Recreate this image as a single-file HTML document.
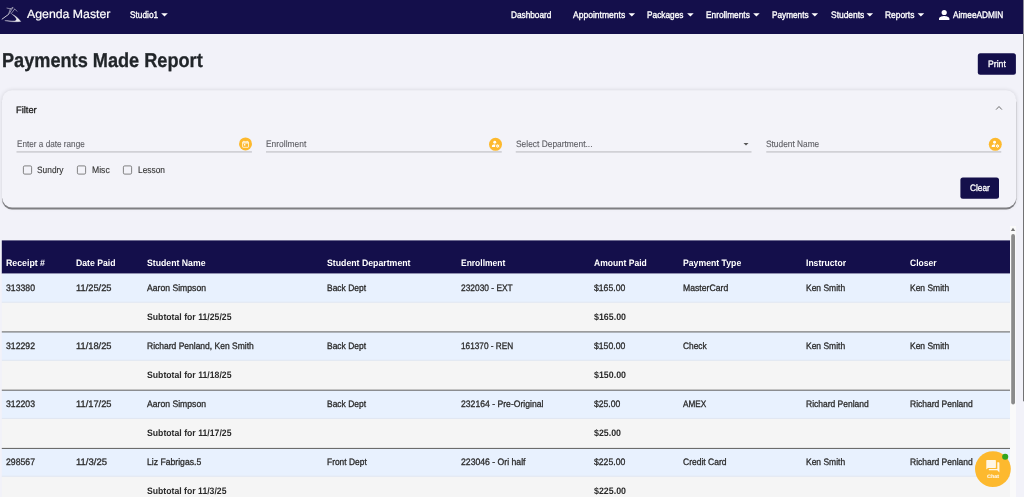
<!DOCTYPE html>
<html><head><meta charset="utf-8"><title>Payments Made Report</title>
<style>
html,body{margin:0;padding:0}
body{width:1024px;height:497px;overflow:hidden;position:relative;background:#f2f2f9;font-family:"Liberation Sans",sans-serif}
.t{position:absolute;white-space:pre;line-height:1;transform-origin:0 50%;text-rendering:geometricPrecision}
.a{position:absolute;display:block}
.ct{left:987.1px;top:474.7px;font-size:5px;font-weight:700;color:#fff3dc;transform:scaleX(1.09);-webkit-text-stroke:.15px #fff3dc}
</style></head><body>
<svg class="a" style="left:0;top:0" width="1024" height="497" viewBox="0 0 1024 497"><defs><filter id="b1" x="-5%" y="-20%" width="110%" height="140%"><feGaussianBlur stdDeviation=".55"/></filter><filter id="b2" x="-5%" y="-20%" width="110%" height="140%"><feGaussianBlur stdDeviation="2"/></filter></defs><rect x="2" y="90.3" width="1014.3" height="117.1" fill="#000" rx="10" opacity=".13" filter="url(#b2)"/><rect x="2" y="92.4" width="1014.3" height="117.1" fill="#000" rx="10" opacity=".45" filter="url(#b1)"/><rect x="2" y="90.3" width="1014.3" height="117.1" fill="#f3f3f9" rx="10"/><rect x="0" y="0" width="1024" height="34" fill="#140f4b"/><rect x="1.8" y="240.4" width="1008.2" height="33.3" fill="#140f4b"/><rect x="1.8" y="273.6" width="1008.2" height="29.1" fill="#e8f1fe"/><rect x="1.8" y="302.5" width="1008.2" height="29.6" fill="#f5f5f5"/><rect x="1.8" y="331.9" width="1008.2" height="28.9" fill="#e8f1fe"/><rect x="1.8" y="360.6" width="1008.2" height="29.8" fill="#f5f5f5"/><rect x="1.8" y="390.2" width="1008.2" height="28.7" fill="#e8f1fe"/><rect x="1.8" y="418.7" width="1008.2" height="29.95" fill="#f5f5f5"/><rect x="1.8" y="448.45" width="1008.2" height="28.25" fill="#e8f1fe"/><rect x="1.8" y="476.5" width="1008.2" height="30.4" fill="#f5f5f5"/><rect x="1.8" y="301.7" width="1008.2" height="1" fill="#e0e6f1"/><rect x="1.8" y="331.35" width="1008.2" height="1.1" fill="#6c6c6c"/><rect x="1.8" y="359.8" width="1008.2" height="1" fill="#e0e6f1"/><rect x="1.8" y="389.65" width="1008.2" height="1.1" fill="#6c6c6c"/><rect x="1.8" y="417.9" width="1008.2" height="1" fill="#e0e6f1"/><rect x="1.8" y="447.9" width="1008.2" height="1.1" fill="#6c6c6c"/><rect x="1.8" y="475.7" width="1008.2" height="1" fill="#e0e6f1"/><rect x="1.8" y="506.15" width="1008.2" height="1.1" fill="#6c6c6c"/><rect x="16.5" y="151.15" width="235.4" height="1.5" fill="#cbcbd1"/><rect x="266" y="151.15" width="235.75" height="1.5" fill="#cbcbd1"/><rect x="515.75" y="151.15" width="235.75" height="1.5" fill="#cbcbd1"/><rect x="766.25" y="151.15" width="235" height="1.5" fill="#cbcbd1"/><rect x="1010" y="226" width="6" height="271" fill="#fafafa"/><path d="M1010.8 231l2.2-3.2 2.2 3.2z" fill="#777"/><rect x="1011.2" y="234" width="3.8" height="170.5" fill="#8b8b8b" rx="1.9"/><rect x="1023" y="0" width="1" height="34" fill="#8d8d9a"/><rect x="1023" y="34" width="1" height="367.3" fill="#727274"/><rect x="977.8" y="53.3" width="38.1" height="21.4" fill="#140f4b" rx="2.5"/><path d="M161.2 13.2h6.6l-3.3 3.4z" fill="#fff"/><path d="M628.5 13.2h6.6l-3.3 3.4z" fill="#fff"/><path d="M687.1 13.2h6.6l-3.3 3.4z" fill="#fff"/><path d="M753.1 13.2h6.6l-3.3 3.4z" fill="#fff"/><path d="M811.5 13.2h6.6l-3.3 3.4z" fill="#fff"/><path d="M866.5 13.2h6.6l-3.3 3.4z" fill="#fff"/><path d="M917.6 13.2h6.6l-3.3 3.4z" fill="#fff"/><path d="M743.5 143h5l-2.5 2.5z" fill="#555"/><g transform="translate(239 137.4) scale(0.5)"><circle cx="13" cy="13" r="13" fill="#fdb92e"/><g fill="none" stroke="#fff" stroke-width="1.5"><rect x="7.2" y="8.6" width="11.8" height="11.2" rx="1"/><path d="M7.2 11h11.8" stroke-width="2.2"/><path d="M9.8 6.8v2M16.4 6.8v2"/></g><rect x="9.9" y="13.4" width="2.8" height="3" fill="#fff"/></g><g transform="translate(489 137.8) scale(0.5)"><circle cx="13" cy="13" r="13" fill="#fdb92e"/><circle cx="11.5" cy="9" r="2.9" fill="#fff"/><path d="M5.8 18.2v-2c0-1.7 3.4-2.6 5.7-2.6.5 0 1 0 1.5.1-.6.9-.9 1.9-.9 3 0 .5.1 1 .3 1.5z" fill="#fff"/><circle cx="17.4" cy="16.4" r="2.7" fill="#fff"/><path d="M17.4 12.6v7.6M14.1 14.5l6.6 3.8M14.1 18.3l6.6-3.8" stroke="#fff" stroke-width="1.3"/><circle cx="17.4" cy="16.4" r="1.1" fill="#fdb92e"/></g><g transform="translate(988.8 137.8) scale(0.5)"><circle cx="13" cy="13" r="13" fill="#fdb92e"/><circle cx="11.5" cy="9" r="2.9" fill="#fff"/><path d="M5.8 18.2v-2c0-1.7 3.4-2.6 5.7-2.6.5 0 1 0 1.5.1-.6.9-.9 1.9-.9 3 0 .5.1 1 .3 1.5z" fill="#fff"/><circle cx="17.4" cy="16.4" r="2.7" fill="#fff"/><path d="M17.4 12.6v7.6M14.1 14.5l6.6 3.8M14.1 18.3l6.6-3.8" stroke="#fff" stroke-width="1.3"/><circle cx="17.4" cy="16.4" r="1.1" fill="#fdb92e"/></g><g transform="translate(0 0) scale(1)"><g fill="none" stroke="#fff" stroke-linecap="round" stroke-width=".55" opacity=".92"><path d="M2.1 19.1L8.5 14.4" stroke-width=".85"/><path d="M7 8.1l3.4.7 2.4-1.2M12.8 7.6L9.4 13.4M14.5 9.3l-3.4 4.4M14.5 8.8l2.4 2.4M10.4 8.8L8.7 13.7"/><path d="M12.2 14.3C15.3 15.6 18.6 18.3 20.8 21.5 15 22.1 9 21.6 4.8 20.6 8.5 21 12 21.2 15 20.9 17 20.5 16.5 18.5 15.6 17.6 14.6 16.3 13.5 15.2 12.2 14.3z" fill="#fff" stroke-width=".3"/></g></g><g transform="translate(939 9.9) scale(0.65)"><circle cx="8" cy="4" r="4" fill="#fff"/><path d="M0 15.4v-1.9c0-2.7 5.3-4 8-4s8 1.3 8 4v1.9z" fill="#fff"/></g><g transform="translate(995.5 105.3) scale(1)"><path d="M.6 4.3L3.5 1.2l2.9 3.1" fill="none" stroke="#606060" stroke-width=".9"/></g><rect x="23.4" y="165.9" width="8.2" height="8.2" rx="1.3" fill="none" stroke="#666" stroke-width=".8"/><rect x="77.4" y="165.9" width="8.2" height="8.2" rx="1.3" fill="none" stroke="#666" stroke-width=".8"/><rect x="123.4" y="165.9" width="8.2" height="8.2" rx="1.3" fill="none" stroke="#666" stroke-width=".8"/><rect x="960.4" y="177.4" width="38.6" height="21.3" fill="#140f4b" rx="2.5"/><g transform="translate(975 451.2) scale(1)"><circle cx="17.9" cy="17.9" r="17.9" fill="#fdb92e"/><path d="M11.9 8.7h8.4a.6.6 0 0 1 .6.6v6.8a.6.6 0 0 1-.6.6h-7.3l-1.7 1.6V9.3a.6.6 0 0 1 .6-.600z" fill="#fff6e6"/><path d="M22.3 11.1h1.5a.6.6 0 0 1 .6.6v9.6l-2.1-2.2h-7.9a.6.6 0 0 1-.6-.600v-.600h8.5z" fill="#fff6e6"/><circle cx="30.2" cy="5.6" r="3.05" fill="#2fa41f"/></g></svg>
<span class="t" style="left:26.8px;top:8.4px;font-size:12px;font-weight:400;color:#fff;transform:scaleX(1.0247);-webkit-text-stroke:0.2px currentColor;">Agenda Master</span><span class="t" style="left:129.8px;top:11px;font-size:9.6px;font-weight:400;color:#fff;transform:scaleX(0.8634);-webkit-text-stroke:0.35px currentColor;">Studio1</span><span class="t" style="left:511.2px;top:11px;font-size:9.5px;font-weight:400;color:#fff;transform:scaleX(0.8670);-webkit-text-stroke:0.35px currentColor;">Dashboard</span><span class="t" style="left:573.4px;top:11px;font-size:9.5px;font-weight:400;color:#fff;transform:scaleX(0.8985);-webkit-text-stroke:0.35px currentColor;">Appointments</span><span class="t" style="left:647.2px;top:11px;font-size:9.5px;font-weight:400;color:#fff;transform:scaleX(0.8722);-webkit-text-stroke:0.35px currentColor;">Packages</span><span class="t" style="left:705.8px;top:11px;font-size:9.5px;font-weight:400;color:#fff;transform:scaleX(0.8730);-webkit-text-stroke:0.35px currentColor;">Enrollments</span><span class="t" style="left:772px;top:11px;font-size:9.5px;font-weight:400;color:#fff;transform:scaleX(0.8663);-webkit-text-stroke:0.35px currentColor;">Payments</span><span class="t" style="left:830.5px;top:11px;font-size:9.5px;font-weight:400;color:#fff;transform:scaleX(0.8880);-webkit-text-stroke:0.35px currentColor;">Students</span><span class="t" style="left:885.4px;top:11px;font-size:9.5px;font-weight:400;color:#fff;transform:scaleX(0.8838);-webkit-text-stroke:0.35px currentColor;">Reports</span><span class="t" style="left:953px;top:11px;font-size:9.5px;font-weight:400;color:#fff;transform:scaleX(0.8723);-webkit-text-stroke:0.35px currentColor;">AimeeADMIN</span><span class="t" style="left:1.9px;top:51px;font-size:20px;font-weight:700;color:#212529;transform:scaleX(0.9074);-webkit-text-stroke:0.3px currentColor;">Payments Made Report</span><span class="t" style="left:987.6px;top:60px;font-size:9.33px;font-weight:400;color:#fff;transform:scaleX(0.9277);-webkit-text-stroke:0.3px currentColor;">Print</span><span class="t" style="left:16.1px;top:106px;font-size:9.33px;font-weight:400;color:#222;transform:scaleX(0.9983);-webkit-text-stroke:0.3px currentColor;">Filter</span><span class="t" style="left:16.6px;top:140px;font-size:9.33px;font-weight:400;color:#5e5e64;transform:scaleX(0.8767);-webkit-text-stroke:0.12px currentColor;">Enter a date range</span><span class="t" style="left:266.1px;top:140px;font-size:9.33px;font-weight:400;color:#5e5e64;transform:scaleX(0.9026);-webkit-text-stroke:0.12px currentColor;">Enrollment</span><span class="t" style="left:515.85px;top:140px;font-size:9.33px;font-weight:400;color:#5e5e64;transform:scaleX(0.8997);-webkit-text-stroke:0.12px currentColor;">Select Department...</span><span class="t" style="left:766.35px;top:140px;font-size:9.33px;font-weight:400;color:#5e5e64;transform:scaleX(0.8928);-webkit-text-stroke:0.12px currentColor;">Student Name</span><span class="t" style="left:37.35px;top:166px;font-size:9.33px;font-weight:400;color:#333;transform:scaleX(0.8964);-webkit-text-stroke:0.12px currentColor;">Sundry</span><span class="t" style="left:91.85px;top:166px;font-size:9.33px;font-weight:400;color:#333;transform:scaleX(0.9258);-webkit-text-stroke:0.12px currentColor;">Misc</span><span class="t" style="left:137.85px;top:166px;font-size:9.33px;font-weight:400;color:#333;transform:scaleX(0.8972);-webkit-text-stroke:0.12px currentColor;">Lesson</span><span class="t" style="left:969.6px;top:184px;font-size:9.33px;font-weight:400;color:#fff;transform:scaleX(0.8880);-webkit-text-stroke:0.3px currentColor;">Clear</span><span class="t" style="left:6.35px;top:259px;font-size:9.33px;font-weight:700;color:#fff;transform:scaleX(0.9401);">Receipt #</span><span class="t" style="left:76.35px;top:259px;font-size:9.33px;font-weight:700;color:#fff;transform:scaleX(0.9291);">Date Paid</span><span class="t" style="left:147.1px;top:259px;font-size:9.33px;font-weight:700;color:#fff;transform:scaleX(0.9327);">Student Name</span><span class="t" style="left:327.35px;top:259px;font-size:9.33px;font-weight:700;color:#fff;transform:scaleX(0.9366);">Student Department</span><span class="t" style="left:460.85px;top:259px;font-size:9.33px;font-weight:700;color:#fff;transform:scaleX(0.9083);">Enrollment</span><span class="t" style="left:593.6px;top:259px;font-size:9.33px;font-weight:700;color:#fff;transform:scaleX(0.9169);">Amount Paid</span><span class="t" style="left:683.35px;top:259px;font-size:9.33px;font-weight:700;color:#fff;transform:scaleX(0.9311);">Payment Type</span><span class="t" style="left:806.1px;top:259px;font-size:9.33px;font-weight:700;color:#fff;transform:scaleX(0.9186);">Instructor</span><span class="t" style="left:910.1px;top:259px;font-size:9.33px;font-weight:700;color:#fff;transform:scaleX(0.9123);">Closer</span><span class="t" style="left:6.35px;top:284px;font-size:9.33px;font-weight:400;color:#2b2b2b;transform:scaleX(0.9313);-webkit-text-stroke:0.3px currentColor;">313380</span><span class="t" style="left:76.35px;top:284px;font-size:9.33px;font-weight:400;color:#2b2b2b;transform:scaleX(0.9965);-webkit-text-stroke:0.3px currentColor;">11/25/25</span><span class="t" style="left:147.1px;top:284px;font-size:9.33px;font-weight:400;color:#2b2b2b;transform:scaleX(0.9250);-webkit-text-stroke:0.3px currentColor;">Aaron Simpson</span><span class="t" style="left:327.35px;top:284px;font-size:9.33px;font-weight:400;color:#2b2b2b;transform:scaleX(0.9060);-webkit-text-stroke:0.3px currentColor;">Back Dept</span><span class="t" style="left:460.85px;top:284px;font-size:9.33px;font-weight:400;color:#2b2b2b;transform:scaleX(0.8990);-webkit-text-stroke:0.3px currentColor;">232030 - EXT</span><span class="t" style="left:593.6px;top:284px;font-size:9.33px;font-weight:400;color:#2b2b2b;transform:scaleX(0.9264);-webkit-text-stroke:0.3px currentColor;">$165.00</span><span class="t" style="left:683.35px;top:284px;font-size:9.33px;font-weight:400;color:#2b2b2b;transform:scaleX(0.9285);-webkit-text-stroke:0.3px currentColor;">MasterCard</span><span class="t" style="left:806.1px;top:284px;font-size:9.33px;font-weight:400;color:#2b2b2b;transform:scaleX(0.9083);-webkit-text-stroke:0.3px currentColor;">Ken Smith</span><span class="t" style="left:910.1px;top:284px;font-size:9.33px;font-weight:400;color:#2b2b2b;transform:scaleX(0.9083);-webkit-text-stroke:0.3px currentColor;">Ken Smith</span><span class="t" style="left:147.1px;top:313px;font-size:9.33px;font-weight:700;color:#2b2b2b;transform:scaleX(0.9313);">Subtotal for 11/25/25</span><span class="t" style="left:593.6px;top:313px;font-size:9.33px;font-weight:700;color:#2b2b2b;transform:scaleX(0.9486);">$165.00</span><span class="t" style="left:6.35px;top:342px;font-size:9.33px;font-weight:400;color:#2b2b2b;transform:scaleX(0.9313);-webkit-text-stroke:0.3px currentColor;">312292</span><span class="t" style="left:76.35px;top:342px;font-size:9.33px;font-weight:400;color:#2b2b2b;transform:scaleX(0.9965);-webkit-text-stroke:0.3px currentColor;">11/18/25</span><span class="t" style="left:147.1px;top:342px;font-size:9.33px;font-weight:400;color:#2b2b2b;transform:scaleX(0.9109);-webkit-text-stroke:0.3px currentColor;">Richard Penland, Ken Smith</span><span class="t" style="left:327.35px;top:342px;font-size:9.33px;font-weight:400;color:#2b2b2b;transform:scaleX(0.9060);-webkit-text-stroke:0.3px currentColor;">Back Dept</span><span class="t" style="left:460.85px;top:342px;font-size:9.33px;font-weight:400;color:#2b2b2b;transform:scaleX(0.8837);-webkit-text-stroke:0.3px currentColor;">161370 - REN</span><span class="t" style="left:593.6px;top:342px;font-size:9.33px;font-weight:400;color:#2b2b2b;transform:scaleX(0.9264);-webkit-text-stroke:0.3px currentColor;">$150.00</span><span class="t" style="left:683.35px;top:342px;font-size:9.33px;font-weight:400;color:#2b2b2b;transform:scaleX(0.8978);-webkit-text-stroke:0.3px currentColor;">Check</span><span class="t" style="left:806.1px;top:342px;font-size:9.33px;font-weight:400;color:#2b2b2b;transform:scaleX(0.9083);-webkit-text-stroke:0.3px currentColor;">Ken Smith</span><span class="t" style="left:910.1px;top:342px;font-size:9.33px;font-weight:400;color:#2b2b2b;transform:scaleX(0.9083);-webkit-text-stroke:0.3px currentColor;">Ken Smith</span><span class="t" style="left:147.1px;top:371px;font-size:9.33px;font-weight:700;color:#2b2b2b;transform:scaleX(0.9313);">Subtotal for 11/18/25</span><span class="t" style="left:593.6px;top:371px;font-size:9.33px;font-weight:700;color:#2b2b2b;transform:scaleX(0.9486);">$150.00</span><span class="t" style="left:6.35px;top:400px;font-size:9.33px;font-weight:400;color:#2b2b2b;transform:scaleX(0.9313);-webkit-text-stroke:0.3px currentColor;">312203</span><span class="t" style="left:76.35px;top:400px;font-size:9.33px;font-weight:400;color:#2b2b2b;transform:scaleX(0.9965);-webkit-text-stroke:0.3px currentColor;">11/17/25</span><span class="t" style="left:147.1px;top:400px;font-size:9.33px;font-weight:400;color:#2b2b2b;transform:scaleX(0.9250);-webkit-text-stroke:0.3px currentColor;">Aaron Simpson</span><span class="t" style="left:327.35px;top:400px;font-size:9.33px;font-weight:400;color:#2b2b2b;transform:scaleX(0.9060);-webkit-text-stroke:0.3px currentColor;">Back Dept</span><span class="t" style="left:460.85px;top:400px;font-size:9.33px;font-weight:400;color:#2b2b2b;transform:scaleX(0.9250);-webkit-text-stroke:0.3px currentColor;">232164 - Pre-Original</span><span class="t" style="left:593.6px;top:400px;font-size:9.33px;font-weight:400;color:#2b2b2b;transform:scaleX(0.9200);-webkit-text-stroke:0.3px currentColor;">$25.00</span><span class="t" style="left:683.35px;top:400px;font-size:9.33px;font-weight:400;color:#2b2b2b;transform:scaleX(0.8794);-webkit-text-stroke:0.3px currentColor;">AMEX</span><span class="t" style="left:806.1px;top:400px;font-size:9.33px;font-weight:400;color:#2b2b2b;transform:scaleX(0.9098);-webkit-text-stroke:0.3px currentColor;">Richard Penland</span><span class="t" style="left:910.1px;top:400px;font-size:9.33px;font-weight:400;color:#2b2b2b;transform:scaleX(0.9098);-webkit-text-stroke:0.3px currentColor;">Richard Penland</span><span class="t" style="left:147.1px;top:429px;font-size:9.33px;font-weight:700;color:#2b2b2b;transform:scaleX(0.9313);">Subtotal for 11/17/25</span><span class="t" style="left:593.6px;top:429px;font-size:9.33px;font-weight:700;color:#2b2b2b;transform:scaleX(0.9463);">$25.00</span><span class="t" style="left:6.35px;top:458px;font-size:9.33px;font-weight:400;color:#2b2b2b;transform:scaleX(0.9313);-webkit-text-stroke:0.3px currentColor;">298567</span><span class="t" style="left:76.35px;top:458px;font-size:9.33px;font-weight:400;color:#2b2b2b;transform:scaleX(1.0185);-webkit-text-stroke:0.3px currentColor;">11/3/25</span><span class="t" style="left:147.1px;top:458px;font-size:9.33px;font-weight:400;color:#2b2b2b;transform:scaleX(0.9259);-webkit-text-stroke:0.3px currentColor;">Liz Fabrigas.5</span><span class="t" style="left:327.35px;top:458px;font-size:9.33px;font-weight:400;color:#2b2b2b;transform:scaleX(0.9018);-webkit-text-stroke:0.3px currentColor;">Front Dept</span><span class="t" style="left:460.85px;top:458px;font-size:9.33px;font-weight:400;color:#2b2b2b;transform:scaleX(0.9283);-webkit-text-stroke:0.3px currentColor;">223046 - Ori half</span><span class="t" style="left:593.6px;top:458px;font-size:9.33px;font-weight:400;color:#2b2b2b;transform:scaleX(0.9264);-webkit-text-stroke:0.3px currentColor;">$225.00</span><span class="t" style="left:683.35px;top:458px;font-size:9.33px;font-weight:400;color:#2b2b2b;transform:scaleX(0.9119);-webkit-text-stroke:0.3px currentColor;">Credit Card</span><span class="t" style="left:806.1px;top:458px;font-size:9.33px;font-weight:400;color:#2b2b2b;transform:scaleX(0.9083);-webkit-text-stroke:0.3px currentColor;">Ken Smith</span><span class="t" style="left:910.1px;top:458px;font-size:9.33px;font-weight:400;color:#2b2b2b;transform:scaleX(0.9098);-webkit-text-stroke:0.3px currentColor;">Richard Penland</span><span class="t" style="left:147.1px;top:487px;font-size:9.33px;font-weight:700;color:#2b2b2b;transform:scaleX(0.9293);">Subtotal for 11/3/25</span><span class="t" style="left:593.6px;top:487px;font-size:9.33px;font-weight:700;color:#2b2b2b;transform:scaleX(0.9486);">$225.00</span>
<span class="t ct">Chat</span>
</body></html>
